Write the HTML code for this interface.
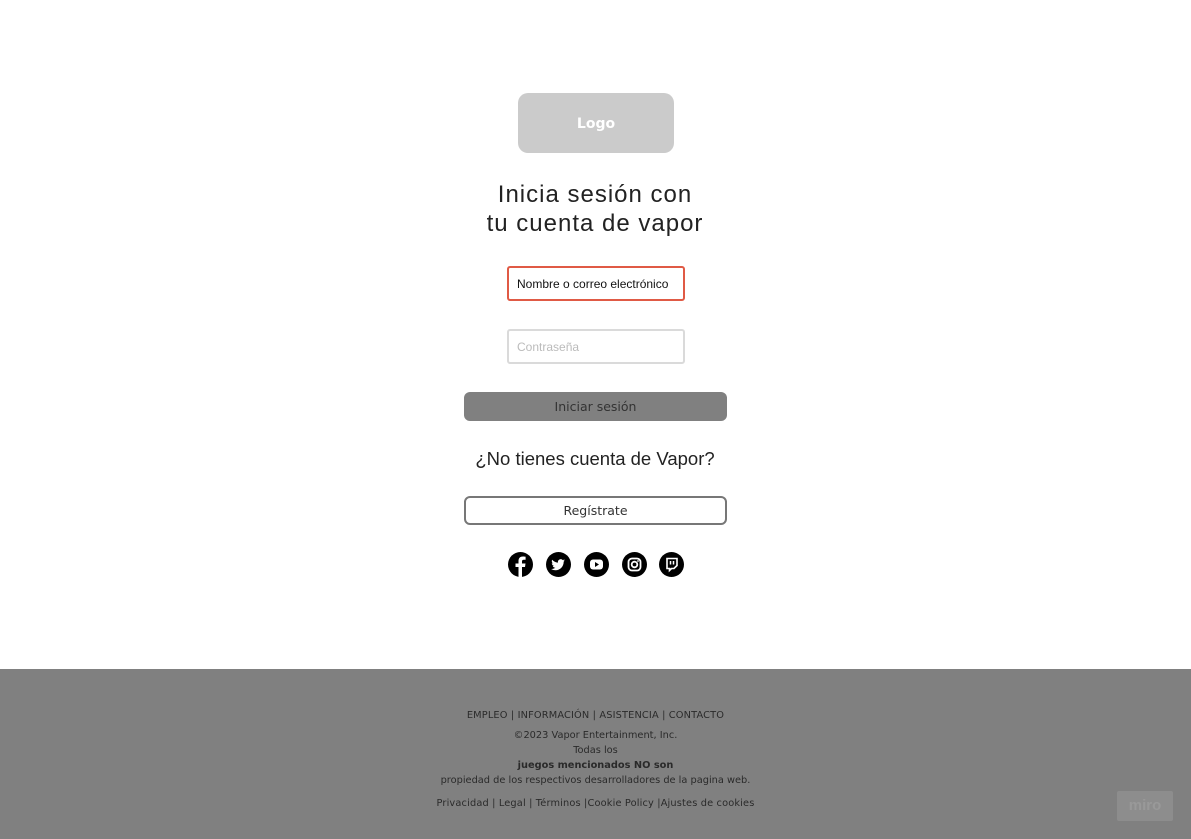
<!DOCTYPE html>
<html><head><meta charset="utf-8"><style>
body{margin:0;width:1191px;height:839px;background:#fff;font-family:"Liberation Sans",sans-serif;position:relative;overflow:hidden}
.a{position:absolute}
.logo{left:518px;top:93px;width:156px;height:60px;background:#cbcbcb;border-radius:10px;color:#fff;font-weight:bold;font-size:14px;text-align:center;line-height:62px;font-family:"DejaVu Sans",sans-serif}
h1{position:absolute;left:395px;width:400px;top:180px;margin:0;font-weight:normal;font-size:24px;line-height:29px;text-align:center;color:#222;letter-spacing:1px}
.in{left:507px;height:35px;border-radius:3px;font-size:12px;line-height:32px;padding-left:8px;box-sizing:border-box;width:178px}
.btn{left:464px;width:263px;border-radius:6px;text-align:center;font-family:"DejaVu Sans",sans-serif;font-size:12.5px;color:#333;box-sizing:border-box}
.ic{top:552px;width:25px;height:25px;border-radius:50%;background:#000}
.f{left:0;width:1191px;top:669px;height:170px;background:#808080;color:#2a2a2a;font-family:"DejaVu Sans",sans-serif;font-size:9.8px;text-align:center}
</style></head><body>
<div class="a logo">Logo</div>
<h1>Inicia sesión con<br>tu cuenta de vapor</h1>
<div class="a in" style="top:266px;border:2px solid #e05a45;color:#111">Nombre o correo electrónico</div>
<div class="a in" style="top:329px;border:2px solid #dadada;color:#bbb">Contraseña</div>
<div class="a btn" style="top:392px;height:29px;line-height:29px;background:#808080">Iniciar sesión</div>
<div class="a" style="left:395px;width:400px;top:448px;text-align:center;font-size:18.5px;color:#222">¿No tienes cuenta de Vapor?</div>
<div class="a btn" style="top:496px;height:29px;line-height:26px;border:2px solid #777;background:#fff">Regístrate</div>
<div class="a ic" style="left:508px"><svg width="25" height="25"><path d="M14 25V15h3l.5-3.5H14V9.5c0-1 .4-1.7 1.8-1.7h1.8V4.7c-.4 0-1.5-.2-2.7-.2-2.7 0-4.4 1.6-4.4 4.5v2.5H7.5V15h3v10z" fill="#fff"/></svg></div>
<div class="a ic" style="left:546px"><svg width="25" height="25"><path d="M19 8.5c-.5.2-1 .4-1.6.4.6-.4 1-.9 1.2-1.5-.5.3-1.1.6-1.8.7a2.8 2.8 0 0 0-4.8 2.5c-2.3-.1-4.4-1.2-5.8-2.9-.8 1.3-.3 2.9.9 3.7-.5 0-.9-.1-1.3-.3 0 1.4 1 2.5 2.2 2.8-.4.1-.9.1-1.3 0 .4 1.1 1.4 1.9 2.6 1.9-1.2.9-2.7 1.4-4.2 1.2 5.8 3.4 12.6-.5 12.6-7.4.6-.4 1-.9 1.3-1.3z" fill="#fff"/></svg></div>
<div class="a ic" style="left:584px"><svg width="25" height="25"><rect x="6" y="7.5" width="13" height="10" rx="3" fill="#fff"/><path d="M11 10v5l4-2.5z" fill="#000"/></svg></div>
<div class="a ic" style="left:622px"><svg width="25" height="25"><rect x="6.5" y="6.5" width="12" height="12" rx="3.5" fill="none" stroke="#fff" stroke-width="1.8"/><circle cx="12.5" cy="12.5" r="2.8" fill="none" stroke="#fff" stroke-width="1.8"/><circle cx="16" cy="9" r=".9" fill="#fff"/></svg></div>
<div class="a ic" style="left:659px"><svg width="25" height="25"><path d="M8 6.5h10v7l-3 3h-2.5l-2 2v-2H8z" fill="none" stroke="#fff" stroke-width="1.6"/><path d="M11.5 9v3.5M14.5 9v3.5" stroke="#fff" stroke-width="1.5"/></svg></div>
<div class="a f">
<div style="margin-top:41px;letter-spacing:.15px">EMPLEO | INFORMACIÓN | ASISTENCIA | CONTACTO</div>
<div style="margin-top:7px;line-height:15px">©2023 Vapor Entertainment, Inc.<br>Todas los<br><b>juegos mencionados NO son</b><br>propiedad de los respectivos desarrolladores de la pagina web.</div>
<div style="margin-top:10px;letter-spacing:.15px">Privacidad | Legal | Términos |Cookie Policy |Ajustes de cookies</div>
</div>
<div class="a" style="left:1117px;top:791px;width:56px;height:30px;background:#8d8d8d;border-radius:2px;color:#999;font-weight:bold;font-size:15px;text-align:center;line-height:30px">miro</div>
</body></html>
